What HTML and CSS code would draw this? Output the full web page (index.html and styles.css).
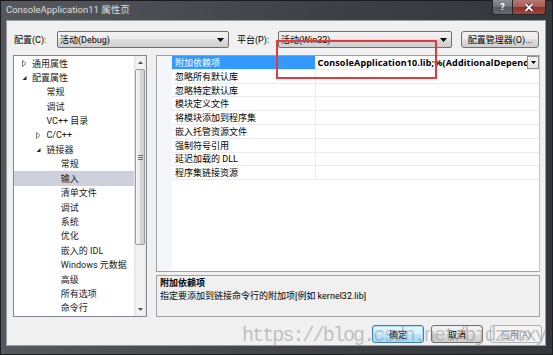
FILE: index.html
```html
<!DOCTYPE html>
<html lang="zh-CN">
<head>
  <meta charset="UTF-8">
  <title>ConsoleApplication11 属性页</title>
  <link rel="stylesheet" href="styles.css">
</head>
<body>
  <div class="window">
    <!-- Title bar with caption buttons -->
    <div class="titlebar">
      <span class="title">ConsoleApplication11 属性页</span>
      <div class="caption-btns">
        <span class="cap-help">?</span>
        <span class="cap-close">
          <svg width="10" height="9" viewBox="0 0 10 9"><path d="M1.5 1 L8.5 8 M8.5 1 L1.5 8" stroke="#2a1210" stroke-width="3.2"/><path d="M1.5 1 L8.5 8 M8.5 1 L1.5 8" stroke="#fff" stroke-width="1.8"/></svg>
        </span>
      </div>
    </div>

    <div class="frame-body">
      <div class="client">
        <!-- Configuration / platform row -->
        <div class="config-row">
          <label class="cfg-label first">配置(C):</label>
          <div class="combo combo-config">
            <span>活动(Debug)</span>
            <svg width="7" height="4" viewBox="0 0 7 4"><path d="M0 0 H7 L3.5 4 Z" fill="#000"/></svg>
          </div>
          <label class="cfg-label second">平台(P):</label>
          <div class="combo combo-platform">
            <span>活动(Win32)</span>
            <svg width="7" height="4" viewBox="0 0 7 4"><path d="M0 0 H7 L3.5 4 Z" fill="#000"/></svg>
          </div>
          <button class="btn config-mgr">配置管理器(O)...</button>
        </div>

        <div class="main">
          <!-- Left tree of property categories -->
          <div class="tree">
            <ul class="tree-list">
              <li class="lvl0"><span class="twisty"><svg width="5" height="7" viewBox="0 0 5 7"><path d="M0.5 0.5 L4 3.5 L0.5 6.5 Z" fill="none" stroke="#7a7a7a"/></svg></span>通用属性</li>
              <li class="lvl0"><span class="twisty"><svg width="5" height="7" viewBox="0 0 5 7"><path d="M4.5 2 L4.5 6 L0.5 6 Z" fill="#262626"/></svg></span>配置属性</li>
              <li class="lvl1"><span class="twisty"></span>常规</li>
              <li class="lvl1"><span class="twisty"></span>调试</li>
              <li class="lvl1"><span class="twisty"></span>VC++ 目录</li>
              <li class="lvl1"><span class="twisty"><svg width="5" height="7" viewBox="0 0 5 7"><path d="M0.5 0.5 L4 3.5 L0.5 6.5 Z" fill="none" stroke="#7a7a7a"/></svg></span>C/C++</li>
              <li class="lvl1"><span class="twisty"><svg width="5" height="7" viewBox="0 0 5 7"><path d="M4.5 2 L4.5 6 L0.5 6 Z" fill="#262626"/></svg></span>链接器</li>
              <li class="lvl2"><span class="twisty"></span>常规</li>
              <li class="lvl2 selected"><span class="twisty"></span>输入</li>
              <li class="lvl2"><span class="twisty"></span>清单文件</li>
              <li class="lvl2"><span class="twisty"></span>调试</li>
              <li class="lvl2"><span class="twisty"></span>系统</li>
              <li class="lvl2"><span class="twisty"></span>优化</li>
              <li class="lvl2"><span class="twisty"></span>嵌入的 IDL</li>
              <li class="lvl2"><span class="twisty"></span>Windows 元数据</li>
              <li class="lvl2"><span class="twisty"></span>高级</li>
              <li class="lvl2"><span class="twisty"></span>所有选项</li>
              <li class="lvl2"><span class="twisty"></span>命令行</li>
            </ul>
            <div class="vscroll">
              <div class="sb-arrow"><svg width="5" height="3" viewBox="0 0 5 3"><path d="M0 3 L2.5 0 L5 3 Z" fill="#555"/></svg></div>
              <div class="sb-thumb"><span class="grip"></span></div>
              <div class="sb-track"></div>
              <div class="sb-arrow"><svg width="5" height="3" viewBox="0 0 5 3"><path d="M0 0 L5 0 L2.5 3 Z" fill="#555"/></svg></div>
            </div>
          </div>

          <!-- Property grid and description -->
          <div class="right-pane">
            <div class="grid">
              <div class="grid-margin"></div>
              <div class="grid-rows">
                <div class="grid-row">
                  <div class="name selected">附加依赖项</div>
                  <div class="value">
                    <span class="value-text">ConsoleApplication10.lib;%(AdditionalDependencies)</span>
                    <span class="drop-btn"><svg width="5" height="3" viewBox="0 0 5 3"><path d="M0 0 L5 0 L2.5 3 Z" fill="#000"/></svg></span>
                  </div>
                </div>
                <div class="grid-row"><div class="name">忽略所有默认库</div><div class="value"></div></div>
                <div class="grid-row"><div class="name">忽略特定默认库</div><div class="value"></div></div>
                <div class="grid-row"><div class="name">模块定义文件</div><div class="value"></div></div>
                <div class="grid-row"><div class="name">将模块添加到程序集</div><div class="value"></div></div>
                <div class="grid-row"><div class="name">嵌入托管资源文件</div><div class="value"></div></div>
                <div class="grid-row"><div class="name">强制符号引用</div><div class="value"></div></div>
                <div class="grid-row"><div class="name">延迟加载的 DLL</div><div class="value"></div></div>
                <div class="grid-row"><div class="name">程序集链接资源</div><div class="value"></div></div>
              </div>
            </div>
            <div class="desc">
              <div class="desc-title">附加依赖项</div>
              <div>指定要添加到链接命令行的附加项[例如 kernel32.lib]</div>
            </div>
          </div>
        </div>

        <!-- Dialog buttons -->
        <div class="button-row">
          <button class="btn btn-default">确定</button>
          <button class="btn">取消</button>
          <button class="btn" disabled>应用(A)</button>
        </div>
      </div>
    </div>

    <!-- Annotation and watermark drawn over the dialog -->
    <div class="highlight-box"></div>
    <div class="watermark">https://blog.csdn.net/bjdzzcxy</div>
  </div>
</body>
</html>
```

FILE: styles.css
```css
/* Basic styling */
* {
  box-sizing: border-box;
}

body {
  margin: 0;
  width: 553px;
  height: 355px;
  overflow: hidden;
  background: #2c2f33;
  font-family: "Segoe UI", Roboto, "Noto Sans CJK SC", sans-serif;
  font-size: 9px;
  color: #000;
}

/* Window frame */
.window {
  position: relative;
  width: 553px;
  height: 355px;
  display: flex;
  flex-direction: column;
  background: linear-gradient(to right, #55585c, #3d4044 60%, #33363a);
  box-shadow: inset 0 0 0 1px #1a1c1f;
}

.titlebar {
  height: 20px;
  display: flex;
  justify-content: space-between;
  align-items: flex-start;
  padding-left: 6px;
}

.title {
  line-height: 20px;
  font-size: 9.5px;
  color: #d9d9d9;
  text-shadow: 0 0 3px #6a6a6a;
}

.caption-btns {
  display: flex;
  margin-right: 7px;
}

.cap-help,
.cap-close {
  height: 15px;
  display: flex;
  align-items: center;
  justify-content: center;
  border: 1px solid #23262a;
  border-top: none;
}

.cap-help {
  width: 20px;
  border-right: none;
  border-radius: 0 0 0 3px;
  background: linear-gradient(#8d9095, #6d7075 50%, #55585d 50%, #676a6f);
  color: #fff;
  font-weight: bold;
  font-size: 9px;
}

.cap-close {
  width: 34px;
  border-radius: 0 0 3px 0;
  background: linear-gradient(#b8776f, #a45c53 50%, #8b3128 50%, #a0463b);
}

/* Client area */
.frame-body {
  flex: 1;
  display: flex;
  min-width: 0;
  padding: 0 7px 9px 6px;
}

.client {
  flex: 1;
  min-width: 0;
  background: #f0f0f0;
  border: 1px solid #9a9ca0;
  padding: 10px 5px 0 6px;
  display: flex;
  flex-direction: column;
}

/* Configuration row */
.config-row {
  display: flex;
  align-items: center;
  height: 17px;
}

.cfg-label.first {
  width: 44px;
  padding-left: 1px;
}

.cfg-label.second {
  width: 49px;
  padding-left: 8px;
}

.combo {
  height: 17px;
  display: flex;
  align-items: center;
  justify-content: space-between;
  padding: 0 4px 0 2px;
  border: 1px solid #707070;
  border-radius: 2px;
  background: linear-gradient(#f2f2f2, #ebebeb 50%, #dddddd 50%, #cfcfcf);
}

.combo-config {
  width: 172px;
}

.combo-platform {
  width: 174px;
}

.btn {
  font-family: inherit;
  font-size: 9px;
  color: #000;
  padding: 0;
  border: 1px solid #707070;
  border-radius: 3px;
  background: linear-gradient(#f2f2f2, #ebebeb 50%, #dddddd 50%, #cfcfcf);
}

.config-mgr {
  width: 78px;
  height: 17px;
  margin-left: 9px;
}

/* Main area */
.main {
  display: flex;
  height: 262px;
  margin-top: 7px;
}

/* Tree */
.tree {
  width: 134px;
  flex-shrink: 0;
  display: flex;
  background: #fff;
  border: 1px solid #828790;
}

.tree-list {
  flex: 1;
  list-style: none;
  margin: 0;
  padding: 0;
  overflow: hidden;
}

.tree-list li {
  height: 14.4px;
  display: flex;
  align-items: center;
  white-space: nowrap;
  color: #1a1a1a;
}

.tree-list li.lvl0 {
  padding-left: 8px;
}

.tree-list li.lvl1 {
  padding-left: 22.4px;
}

.tree-list li.lvl2 {
  padding-left: 36.8px;
}

.tree-list li.selected {
  background: #ccd0db;
}

.twisty {
  width: 10px;
  display: flex;
  align-items: center;
}

/* Tree scrollbar */
.vscroll {
  width: 12px;
  display: flex;
  flex-direction: column;
  background: linear-gradient(to right, #e2e2e2, #f3f3f3 25%, #f3f3f3 75%, #e6e6e6);
}

.sb-arrow {
  height: 13px;
  display: flex;
  align-items: center;
  justify-content: center;
}

.sb-thumb {
  height: 176px;
  margin: 0 1px;
  border: 1px solid #9b9b9b;
  border-radius: 2px;
  background: linear-gradient(to right, #f6f6f6, #e9e9e9 50%, #d9d9d9 50%, #d0d0d0);
  display: flex;
  align-items: center;
  justify-content: center;
}

.grip {
  width: 5px;
  height: 5px;
  border-top: 1px solid #6f6f6f;
  border-bottom: 1px solid #6f6f6f;
  background: linear-gradient(transparent 1px, #6f6f6f 1px, #6f6f6f 2px, transparent 2px);
}

.sb-track {
  flex: 1;
}

/* Right pane */
.right-pane {
  flex: 1;
  min-width: 0;
  margin-left: 9px;
  display: flex;
  flex-direction: column;
}

.grid {
  flex: 1;
  display: flex;
  background: #fff;
  border: 1px solid #a0a0a0;
  border-right-color: #c4c4c4;
}

.grid-margin {
  width: 15px;
  background: #f3f6fb;
}

.grid-rows {
  flex: 1;
  min-width: 0;
}

.grid-row {
  height: 13.8px;
  display: flex;
  border-bottom: 1px solid #ebebeb;
}

.grid-row .name {
  width: 143.5px;
  flex-shrink: 0;
  padding-left: 3px;
  display: flex;
  align-items: center;
  border-right: 1px solid #ebebeb;
  white-space: nowrap;
}

.grid-row .name.selected {
  background: #3399ff;
  color: #fff;
}

.grid-row .value {
  flex: 1;
  display: flex;
  align-items: center;
  min-width: 0;
}

.value-text {
  flex: 1;
  min-width: 0;
  overflow: hidden;
  white-space: nowrap;
  font-family: "Noto Sans", sans-serif;
  font-weight: bold;
  letter-spacing: 0.15px;
  padding-left: 2px;
}

.drop-btn {
  width: 12px;
  height: 100%;
  flex-shrink: 0;
  display: flex;
  align-items: center;
  justify-content: center;
  border: 1px solid #8e8f8f;
  background: linear-gradient(#f4f4f4, #e3e3e3);
}

/* Description */
.desc {
  height: 42px;
  margin-top: 3px;
  padding: 1px 3px;
  line-height: 12.7px;
  border: 1px solid #a0a0a0;
  background: #f0f0f0;
}

.desc-title {
  font-weight: bold;
}

/* Dialog buttons */
.button-row {
  display: flex;
  justify-content: flex-end;
  gap: 7px;
  margin-top: 8px;
  margin-right: -2px;
}

.button-row .btn {
  width: 52px;
  height: 18px;
}

.btn-default {
  border-color: #3c7fb1;
  background: linear-gradient(#eaf6fd, #d9f0fc 50%, #bee6fd 50%, #a7d9f5);
  box-shadow: inset 0 0 0 1px #a9dcf6;
}

.btn:disabled {
  border-color: #adb2b5;
  background: #f4f4f4;
  color: #838383;
}

/* Red annotation box */
.highlight-box {
  position: absolute;
  left: 276px;
  top: 40px;
  width: 161px;
  height: 39px;
  border: 2px solid #e33b3b;
}

/* Blog watermark */
.watermark {
  position: absolute;
  left: 242px;
  top: 326px;
  font-family: "Liberation Mono", monospace;
  font-size: 20px;
  line-height: 20px;
  letter-spacing: -1.9px;
  color: rgba(150, 150, 150, 0.55);
  white-space: nowrap;
}
```
